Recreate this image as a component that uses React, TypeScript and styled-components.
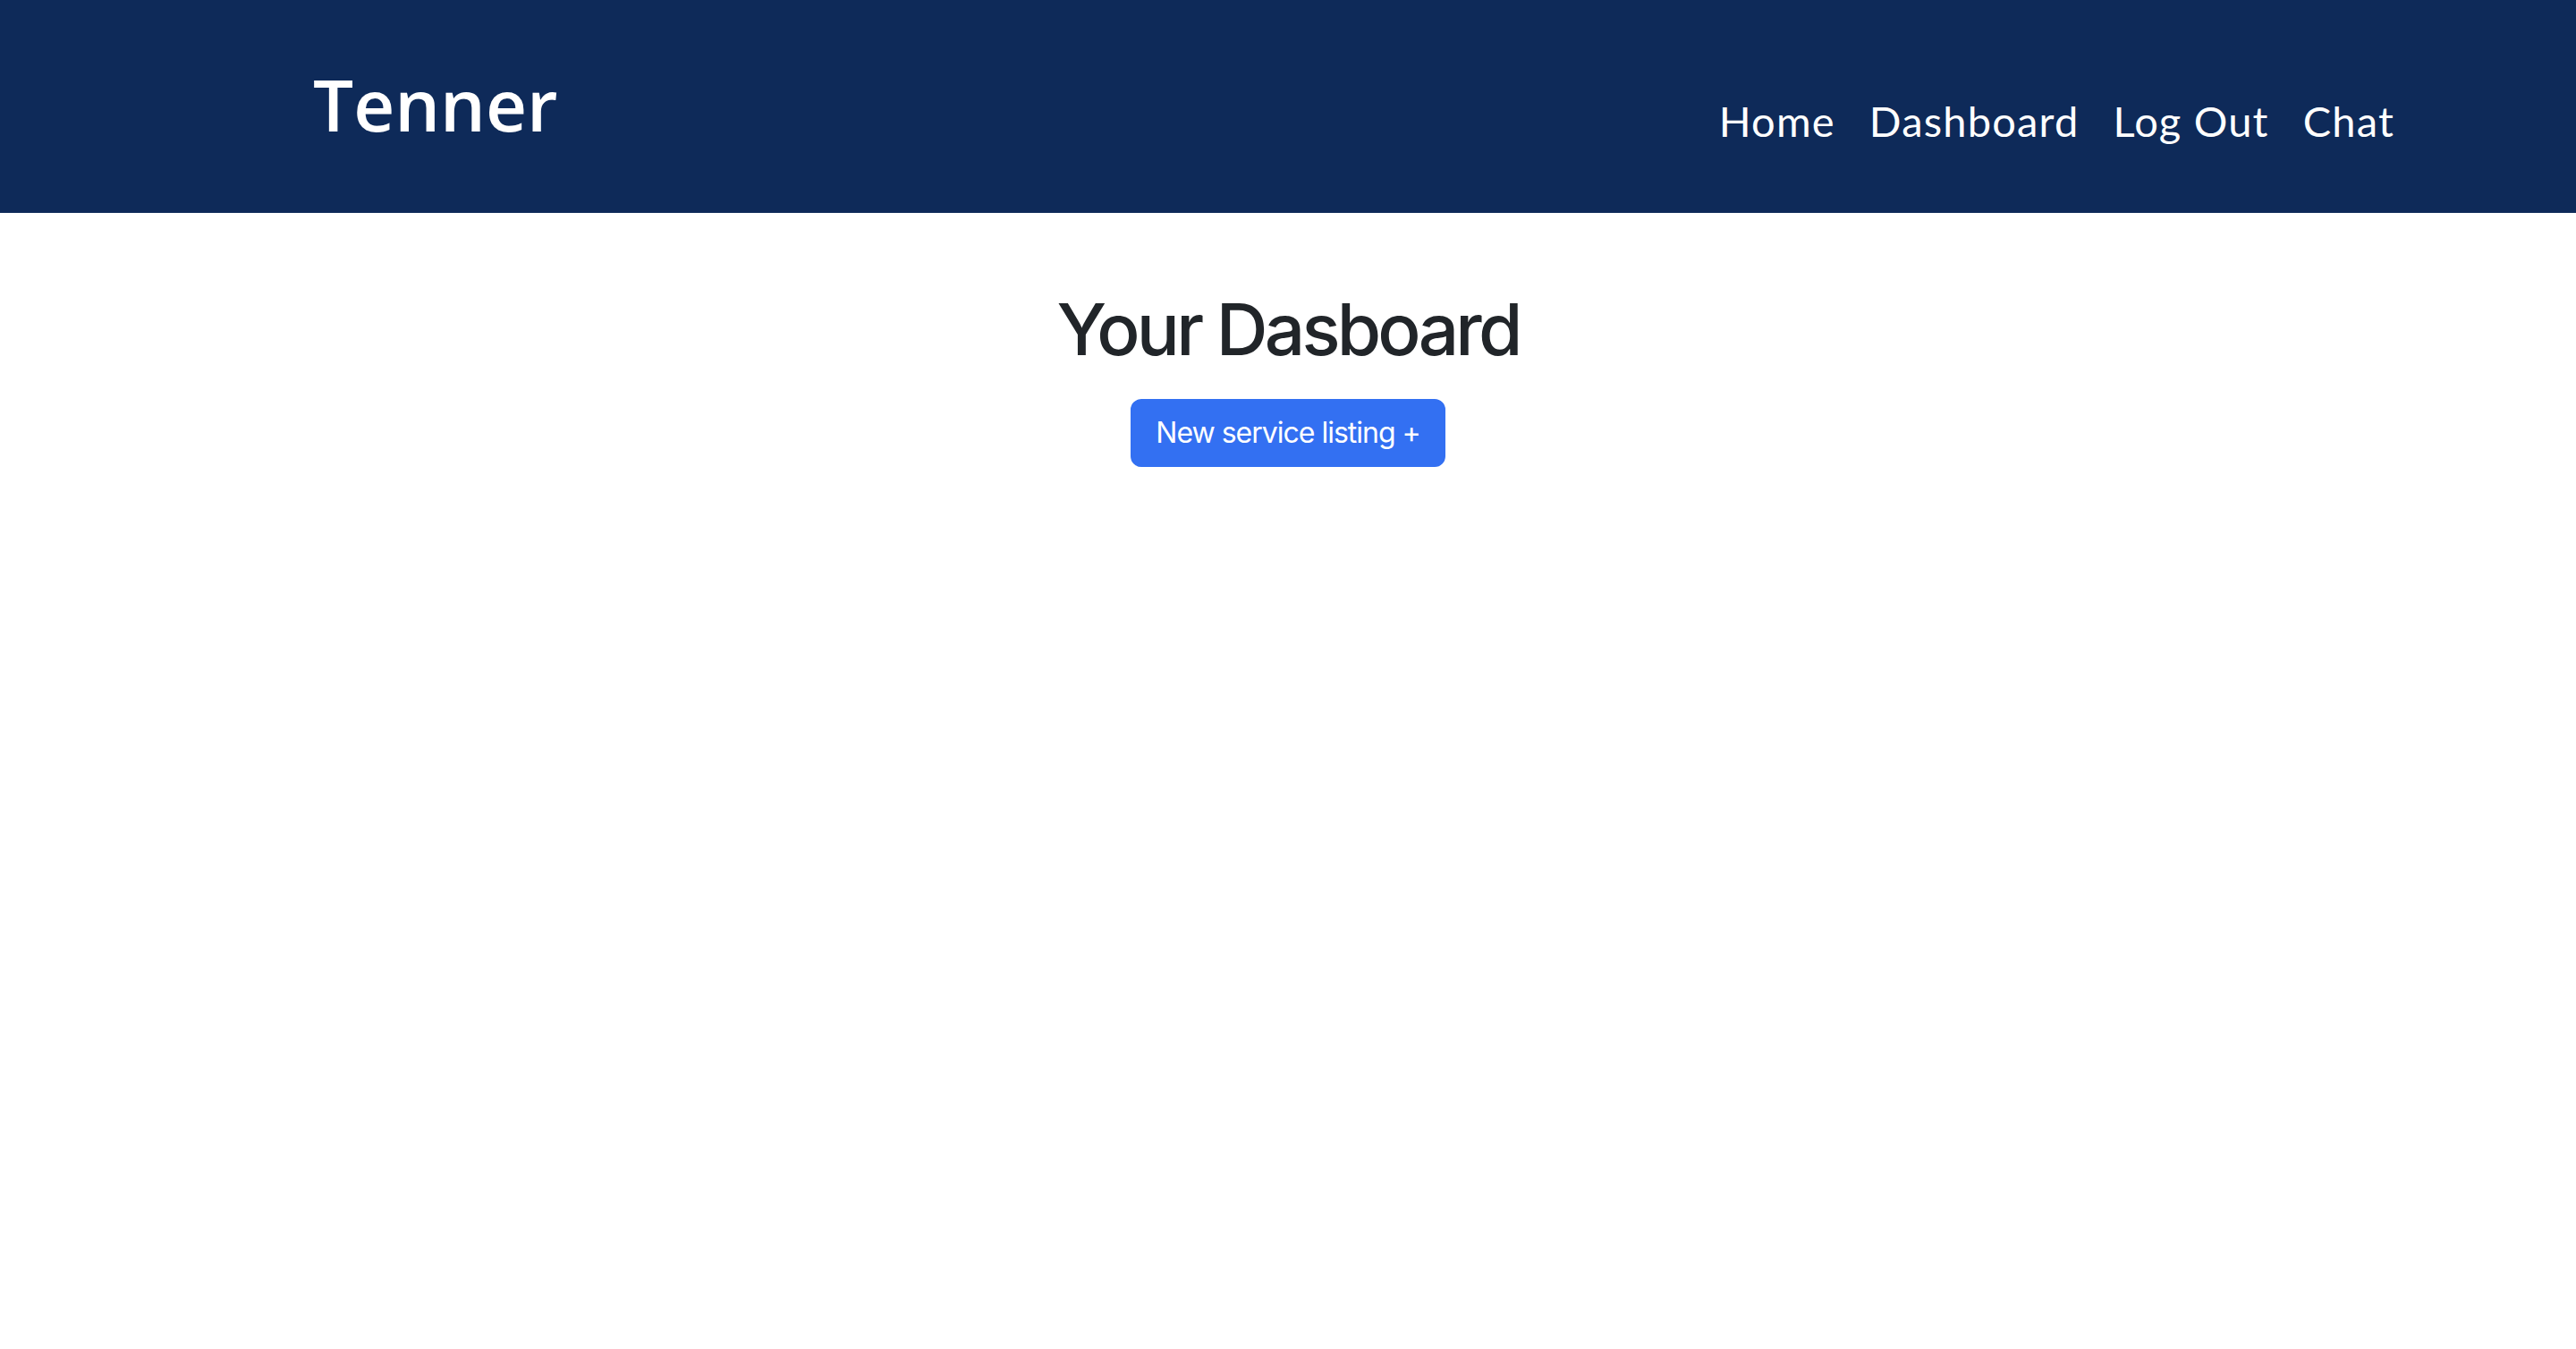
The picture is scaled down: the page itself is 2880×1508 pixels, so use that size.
import styled, { createGlobalStyle } from 'styled-components';

const GlobalStyle = createGlobalStyle`
  html, body {
    margin: 0;
    padding: 0;
    background: #ffffff;
  }
  body {
    font-family: Inter, "Liberation Sans", sans-serif;
    color: #212529;
  }
  * {
    box-sizing: border-box;
  }
`;

// 顶部导航栏
const NavBar = styled.header`
  height: 238px;
  background: #0e2a59;
  display: flex;
  align-items: center;
  justify-content: space-between;
  padding: 0 203px 0 350px;
`;

const Brand = styled.a`
  font-family: "Open Sans", Lato, sans-serif;
  font-weight: 600;
  font-size: 80px;
  line-height: 1;
  color: #ffffff;
  text-decoration: none;
  margin-top: -6px;
`;

const NavList = styled.nav`
  display: flex;
  align-items: center;
  gap: 38px;
  padding-top: 32px;
`;

const NavLink = styled.a`
  font-family: Lato, "Open Sans", sans-serif;
  font-size: 47px;
  line-height: 1;
  color: #ffffff;
  text-decoration: none;
  letter-spacing: 1.2px;
`;

// 主体
const Main = styled.main`
  display: flex;
  flex-direction: column;
  align-items: center;
  padding-top: 82px;
`;

const Title = styled.h1`
  margin: 0 0 30px;
  font-family: Inter, "Liberation Sans", sans-serif;
  font-weight: 500;
  font-size: 80px;
  line-height: 1.2;
  letter-spacing: -3.8px;
  color: #212529;
`;

const PrimaryButton = styled.button`
  font-family: Inter, "Liberation Sans", sans-serif;
  font-size: 32px;
  line-height: 1.5;
  letter-spacing: -1px;
  padding: 12px 26px;
  border: 2px solid #3370f2;
  border-radius: 12px;
  background: #3370f2;
  color: #ffffff;
  cursor: pointer;
`;

const links = ['Home', 'Dashboard', 'Log Out', 'Chat'];

export default function App() {
  return (
    <>
      <GlobalStyle />
      <NavBar>
        <Brand href="#">Tenner</Brand>
        <NavList>
          {links.map(l => (
            <NavLink key={l} href="#">{l}</NavLink>
          ))}
        </NavList>
      </NavBar>
      <Main>
        <Title>Your Dasboard</Title>
        <PrimaryButton>New service listing +</PrimaryButton>
      </Main>
    </>
  );
}
